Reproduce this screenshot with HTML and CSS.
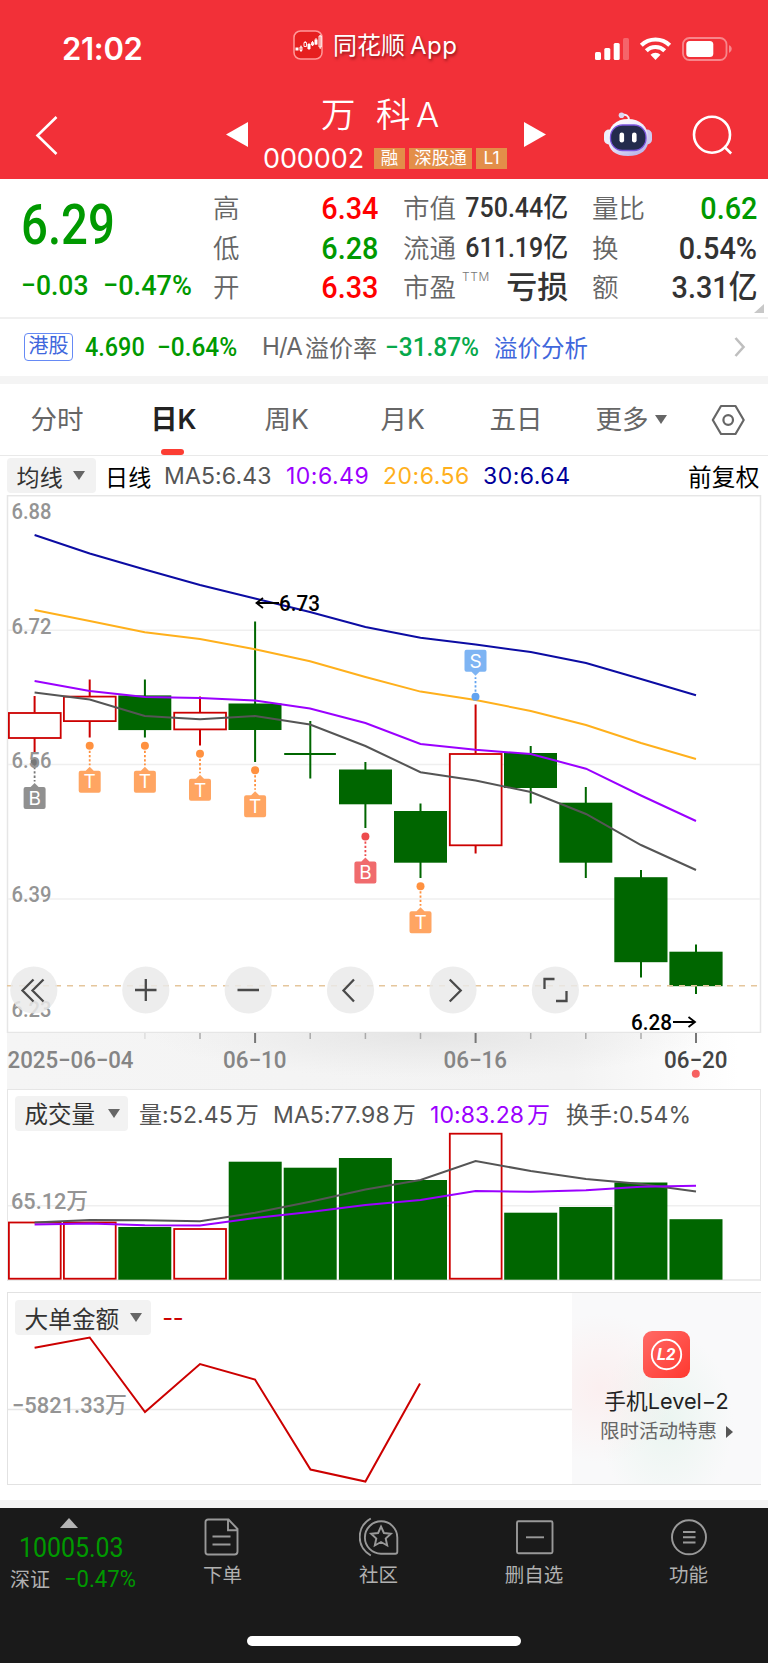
FILE: index.html
```html
<!DOCTYPE html>
<html lang="zh-CN">
<head>
<meta charset="utf-8">
<title>万科A 000002</title>
<link rel="stylesheet" href="styles.css">
</head>
<body>
<header class="top">
  <div class="status">
    <span class="clock">21:02</span>
    <svg class="app-icon" width="30" height="30" viewBox="0 0 30 30"><rect x="1" y="1" width="28" height="28" rx="6.5" fill="#e61f1f" stroke="#f99" stroke-width="1.5"/><path d="M2.500 17.500h3v3h-3zM14.500 14h3v5h-3zM21.500 9.500h3v5h-3z" fill="#fff"/><path d="M7 17h2v3.500h-2zM11 12.500h2.500v4H11zM18.500 12.500h2V15h-2zM26 6h2.300v11H26zM8 15.500v6.500M12.200 11v1.500M16 13v7M19.500 11v5M23 8v7M27.200 5v14" fill="none" stroke="#fff" stroke-width=".9"/></svg>
    <span class="brand">同花顺<b>App</b></span>
    <svg class="signals" width="142" height="30" viewBox="592 32 142 30">
      <g fill="#fff"><rect x="595" y="52" width="6" height="8" rx="1.500"/><rect x="604.300" y="48" width="6" height="12" rx="1.500"/><rect x="613.700" y="43" width="6" height="17" rx="1.500"/><rect x="623" y="38" width="6" height="22" rx="1.500" opacity=".25"/></g>
      <g fill="none" stroke="#fff" stroke-width="4.200"><path d="M641.300 45.200a20.500 20.500 0 0 1 28.400 0"/><path d="M646.300 50.700a13.300 13.300 0 0 1 18.400 0"/></g>
      <path d="M655.500 60l-5-5.200a7.200 7.200 0 0 1 10 0z" fill="#fff"/>
      <rect x="683" y="38" width="43.500" height="22" rx="6.500" fill="none" stroke="#fff" stroke-opacity=".42" stroke-width="1.800"/><rect x="686.300" y="41" width="27" height="16" rx="3.500" fill="#fff"/><path d="M729 45.300a4 4 0 0 1 0 7.600z" fill="#fff" opacity=".42"/>
    </svg>
  </div>
  <div class="nav">
    <svg class="back" width="24" height="44" viewBox="35 114 24 44"><path d="M56.500 117L37.500 135.500l19 18.500" fill="none" stroke="#fff" stroke-width="2.600"/></svg>
    <svg class="prev" width="22" height="26" viewBox="0 0 22 26"><path d="M0 12.500L22 0v25z" fill="#fff"/></svg>
    <div class="stock">
      <h1><span>万</span><span>科</span><span>A</span></h1>
      <p><span class="code">000002</span><i>融</i><i class="wide">深股通</i><i>L1</i></p>
    </div>
    <svg class="next" width="22" height="26" viewBox="0 0 22 26"><path d="M22 12.500L0 0v25z" fill="#fff"/></svg>
    <svg class="bot" width="50" height="46" viewBox="603 111 50 46">
      <defs><linearGradient id="shell" x1="0" y1="0" x2=".6" y2="1"><stop offset="0" stop-color="#fff"/><stop offset=".6" stop-color="#e9e7fa"/><stop offset="1" stop-color="#bcb8ea"/></linearGradient></defs>
      <path d="M621 115.500c5-2 8 .5 8 4.500" fill="none" stroke="#f2f0fb" stroke-width="2"/><circle cx="621.500" cy="115.300" r="2.800" fill="#dcd8f2"/>
      <rect x="604" y="129.500" width="10" height="15" rx="5" fill="#eeeefb"/><rect x="642" y="129.500" width="10" height="15" rx="5" fill="#cfcaf0"/>
      <path d="M608 139c0-13 8-20 20-20s20.500 7 20.500 20c0 11-7.500 17-20.500 17s-20-6-20-17z" fill="url(#shell)"/>
      <rect x="610.500" y="125" width="35.500" height="25.500" rx="12" fill="#232b4c" stroke="#7b55dd" stroke-width="1.300"/>
      <rect x="619.500" y="132.500" width="4.600" height="10" rx="2.300" fill="#fff"/><rect x="632" y="132.500" width="4.600" height="10" rx="2.300" fill="#fff"/>
    </svg>
    <svg class="search" width="42" height="42" viewBox="692 114 42 42"><circle cx="712" cy="134.700" r="18" fill="none" stroke="#fff" stroke-width="2.600"/><path d="M724 146.500l7.200 7" stroke="#fff" stroke-width="2.600"/></svg>
  </div>
</header>

<section class="quote">
  <div class="last"><span class="price num">6.29</span><p><span class="num">−0.03</span><span class="num">−0.47%</span></p></div>
  <dl class="col-a">
    <dt>高</dt><dd class="num up">6.34</dd>
    <dt>低</dt><dd class="num down">6.28</dd>
    <dt>开</dt><dd class="num up">6.33</dd>
  </dl>
  <dl class="col-b">
    <dt>市值</dt><dd class="num small">750.44亿</dd>
    <dt>流通</dt><dd class="num small">611.19亿</dd>
    <dt>市盈<sup>TTM</sup></dt><dd class="loss">亏损</dd>
  </dl>
  <dl class="col-c">
    <dt>量比</dt><dd class="num down">0.62</dd>
    <dt>换</dt><dd class="num">0.54%</dd>
    <dt>额</dt><dd class="num">3.31亿</dd>
  </dl>
  <svg class="corner" width="10" height="9" viewBox="0 0 10 9"><path d="M0 9L10 0v9z" fill="#c8c8c8"/></svg>
</section>

<section class="hk">
  <span class="hk-tag">港股</span><span class="num down">4.690</span><span class="num down wider">−0.64%</span>
  <span class="ha">H/A</span><span class="prem">溢价率</span><span class="num jade wider">−31.87%</span><a>溢价分析</a>
  <svg width="12" height="22" viewBox="0 0 12 22"><path d="M1.500 2l8 9-8 9" fill="none" stroke="#bfbfbf" stroke-width="2.600"/></svg>
</section>

<nav class="tabs">
  <span>分时</span><span class="on">日K</span><span>周K</span><span>月K</span><span>五日</span><span>更多</span>
  <svg class="tri" width="12" height="9" viewBox="0 0 12 9"><path d="M0 0h12L6 9z" fill="#666"/></svg>
  <svg width="34" height="32" viewBox="711 403.500 34 32"><path d="M712.800 419.500l8.200-14h14.500l8.200 14-8.200 14H721z" fill="none" stroke="#666" stroke-width="2.200" stroke-linejoin="round"/><circle cx="728.200" cy="419.500" r="4.800" fill="none" stroke="#666" stroke-width="2.200"/></svg>
</nav>

<div class="ma">
  <span class="chip">均线<svg class="tri" width="12" height="9" viewBox="0 0 12 9"><path d="M0 0h12L6 9z" fill="#666"/></svg></span>
  <span class="k">日线</span><span class="m5">MA5:6.43</span><span class="m10">10:6.49</span><span class="m20">20:6.56</span><span class="m30">30:6.64</span><span class="k adj">前复权</span>
</div>

<svg class="chart" width="768" height="538" viewBox="0 495 768 538">
  <g fill="none" stroke="#e6e6e6" stroke-width="1.500"><rect x="7.500" y="495.700" width="753" height="536.800"/></g>
  <path d="M8 630.300h752M8 764.400h752M8 899h752" stroke="#efefef" stroke-width="1.500"/>
  <g class="axis">
    <text x="11.500" y="519" textLength="40" lengthAdjust="spacingAndGlyphs">6.88</text><text x="11.500" y="633.500" textLength="40" lengthAdjust="spacingAndGlyphs">6.72</text><text x="11.500" y="902.300" textLength="40" lengthAdjust="spacingAndGlyphs">6.39</text><text x="11.500" y="1017" textLength="40" lengthAdjust="spacingAndGlyphs">6.23</text>
  </g>
  <path class="wick-up" d="M34.600 696v16.500M34.600 738v14M89.700 679.500v17M89.700 721v16.500M200 696.500v16M200 729.500v16M475.600 704.500v49M475.600 846v7.500"/>
  <g class="body-up"><rect x="8.900" y="713" width="51.800" height="25"/><rect x="63.900" y="696.600" width="51.800" height="24.500"/><rect x="174.200" y="712.700" width="51.800" height="16.700"/><rect x="449.800" y="754" width="51.800" height="91.300"/></g>
  <path class="wick-down" d="M144.900 679.500v58M255.100 621.500v140.500M310.300 721v57.500M284.200 754h51.700M365.400 762v66M420.500 803.500v74.500M530.700 746v57.500M585.800 787v91M641 870v107.500M696 944.500v49.500"/>
  <g fill="#060"><rect x="118.300" y="695.400" width="53" height="34.700"/><rect x="228.500" y="703.500" width="53" height="26.500"/><rect x="339" y="769.500" width="53" height="34.800"/><rect x="394" y="811" width="53" height="51.700"/><rect x="504" y="753" width="53" height="35"/><rect x="559.300" y="802.700" width="53" height="60"/><rect x="614.300" y="877.200" width="53.200" height="85"/><rect x="669.400" y="951.700" width="53.200" height="34.500"/></g>
  <path d="M7 985.700h754" stroke="#e5c69c" stroke-width="1.500" stroke-dasharray="6 6"/>
  <g fill="none" stroke-width="2">
    <polyline stroke="#555" points="34.6,692.5 89.7,699.5 144.8,716 200,719.3 255,716 310,724.5 365.400,746 420.500,772.2 475.600,780.5 530.800,792 586,814 641,845 696,870"/>
    <polyline stroke="#9b00ff" points="34.6,681 89.7,691 144.8,697 200,698 255,700.5 310,708.5 365.400,723 420.500,744 475.600,749.7 530.800,754 586,768.7 641,795.5 696,821"/>
    <polyline stroke="#ffb01c" points="34.6,610 89.7,621 144.8,632.3 200,639 255,649.3 310,661.3 365.400,677 420.500,691.6 475.600,700 530.800,711 586,725 641,743 696,759"/>
    <polyline stroke="#0c0ca3" points="34.6,535 89.7,553.5 144.8,569.5 200,585 255,598.5 310,612 365.400,627 420.500,637.7 475.600,644.5 530.800,652 586,663 641,679 696,695.3"/>
  </g>
  <defs>
    <g id="pin"><circle r="4"/><path d="M0 5v14.500" stroke="currentColor" stroke-width="1.800" stroke-dasharray="2.300 2"/><path d="M-4 25L0 21l4 4h5a2 2 0 0 1 2 2v18a2 2 0 0 1-2 2H-9a2 2 0 0 1-2-2V27a2 2 0 0 1 2-2z" opacity=".82"/></g>
  </defs>
  <g class="pins">
    <g class="grey" transform="translate(34.600 762)"><use href="#pin"/><text y="42.800">B</text></g>
    <g class="orange" transform="translate(89.700 745.700)"><use href="#pin"/><text y="42.800">T</text></g>
    <g class="orange" transform="translate(144.900 745.700)"><use href="#pin"/><text y="42.800">T</text></g>
    <g class="orange" transform="translate(200 753.800)"><use href="#pin"/><text y="42.800">T</text></g>
    <g class="orange" transform="translate(255.100 770.300)"><use href="#pin"/><text y="42.800">T</text></g>
    <g class="red" transform="translate(365.400 836.400)"><use href="#pin"/><text y="42.800">B</text></g>
    <g class="orange" transform="translate(420.500 886.200)"><use href="#pin"/><text y="42.800">T</text></g>
    <g class="blue" transform="translate(475.500 696.800)"><use href="#pin" transform="scale(1 -1)"/><text y="-29">S</text></g>
  </g>
  <text class="axis" x="11.500" y="768" textLength="40" lengthAdjust="spacingAndGlyphs">6.56</text>
  <g fill="none" stroke="#000" stroke-width="1.800"><path d="M279 603h-22M263 598l-6.500 5 6.500 5M673 1022h21M688.500 1017l6.500 5-6.500 5"/></g>
  <g class="peak"><text x="279" y="611.300" textLength="41" lengthAdjust="spacingAndGlyphs">6.73</text><text x="631" y="1030" textLength="41" lengthAdjust="spacingAndGlyphs">6.28</text></g>
  <g fill="#e9e9e9" fill-opacity=".84"><circle cx="33.800" cy="990" r="23.600"/><circle cx="145.800" cy="990" r="23.600"/><circle cx="248.200" cy="990" r="23.600"/><circle cx="350.500" cy="990" r="23.600"/><circle cx="453" cy="990" r="23.600"/><circle cx="555.400" cy="990" r="23.600"/></g>
  <path d="M33.500 979.500L22.500 990.500l11 11M43.500 979.500L32.500 990.500l11 11M135 990h21.500M145.800 979v22M237.500 990h21.500M354 979.500L343.500 990.500l10.500 11M449.700 979.500l11 11-11 11M544.500 989v-10h10M556 1001h10.500v-10" fill="none" stroke="#4a4a4a" stroke-width="2.300"/>
</svg>

<svg class="dates" width="768" height="56" viewBox="0 1033 768 56">
  <defs>
    <linearGradient id="strip"><stop offset="0" stop-color="#f5f5f5"/><stop offset=".75" stop-color="#f3f3f3"/><stop offset=".97" stop-color="#fff"/></linearGradient>
    <radialGradient id="shade" cx=".5" cy="0" r=".5" gradientTransform="translate(.5 0) scale(1 1.600) translate(-.5 0)"><stop offset="0" stop-color="#e4e4e4"/><stop offset="1" stop-color="#e8e8e8" stop-opacity="0"/></radialGradient>
  </defs>
  <rect x="7" y="1033" width="754" height="56" fill="url(#strip)"/><rect x="150" y="1033" width="560" height="56" fill="url(#shade)"/>
  <path d="M200 1033v6M310.200 1033v6M365.400 1033v6M420.500 1033v6M530.700 1033v6M585.800 1033v6M641 1033v6" stroke="#aaa" stroke-width="1.500"/>
  <path d="M144.900 1033v6" stroke="#ddd" stroke-width="1.500"/>
  <path d="M255.100 1033v10M475.600 1033v10M696 1033v10" stroke="#777" stroke-width="2"/>
  <g class="date"><text x="7.500" y="1067.800" textLength="126" lengthAdjust="spacingAndGlyphs">2025−06−04</text><text x="223" y="1067.800" textLength="63.500" lengthAdjust="spacingAndGlyphs">06−10</text><text x="443.500" y="1067.800" textLength="63.500" lengthAdjust="spacingAndGlyphs">06−16</text><text class="today" x="664" y="1067.800" textLength="63.500" lengthAdjust="spacingAndGlyphs">06−20</text></g>
  <circle cx="695.800" cy="1073.800" r="4" fill="#f66161"/>
</svg>

<section class="volume">
  <div class="legend">
    <span class="chip">成交量<svg class="tri" width="12" height="9" viewBox="0 0 12 9"><path d="M0 0h12L6 9z" fill="#666"/></svg></span>
    <span>量:52.45<s>万</s></span><span>MA5:77.98<s>万</s></span><span class="m10">10:83.28<s>万</s></span><span>换手:0.54%</span>
  </div>
  <svg width="768" height="149" viewBox="0 1132 768 149">
    <path d="M8 1205.800h752" stroke="#efefef" stroke-width="1.500"/>
    <text class="axis" x="11" y="1209" textLength="77" lengthAdjust="spacingAndGlyphs">65.12万</text>
    <path d="M7 1280h754" stroke="#e6e6e6" stroke-width="1.500"/>
    <g class="body-up"><rect x="8.900" y="1222.500" width="51.800" height="56.200"/><rect x="63.900" y="1222.500" width="51.800" height="56.200"/><rect x="174.200" y="1229" width="51.800" height="49.700"/><rect x="449.800" y="1133.700" width="51.800" height="145"/></g>
    <g fill="#060"><rect x="118.300" y="1227" width="53" height="52.700"/><rect x="228.700" y="1161.700" width="53" height="118"/><rect x="283.700" y="1167.700" width="53" height="112"/><rect x="338.900" y="1158" width="53" height="121.700"/><rect x="394" y="1180" width="53" height="99.700"/><rect x="504.200" y="1212.700" width="53" height="67"/><rect x="559.300" y="1207" width="53" height="72.700"/><rect x="614.400" y="1182.500" width="53" height="97.200"/><rect x="669.500" y="1219.200" width="53" height="60.500"/></g>
    <g fill="none" stroke-width="2">
      <polyline stroke="#555" points="34.6,1222.5 89.700,1220 144.8,1220.3 200,1221.3 255,1212.8 310,1201.8 365.400,1189.5 420.500,1180 475.600,1161 530.800,1171 586,1179 641,1184 696,1191.5"/>
      <polyline stroke="#9b00ff" points="34.6,1224.5 89.700,1223.5 144.8,1225.2 200,1225.4 255,1218 310,1212 365.400,1205 420.500,1200 475.600,1191 530.800,1191.700 586,1190.200 641,1186.800 696,1185.800"/>
    </g>
  </svg>
</section>

<section class="flow">
  <div class="flow-chart">
    <div class="legend"><span class="chip">大单金额<svg class="tri" width="12" height="9" viewBox="0 0 12 9"><path d="M0 0h12L6 9z" fill="#666"/></svg></span><span class="dash">--</span></div>
    <svg width="564" height="148" viewBox="8 1336 564 148">
      <path d="M8 1409.500h564" stroke="#e6e6e6" stroke-width="1.300"/>
      <text class="axis" x="12" y="1413" textLength="115" lengthAdjust="spacingAndGlyphs">−5821.33万</text>
      <polyline fill="none" stroke="#c00" stroke-width="2" points="34.6,1347.8 89.7,1337.5 145,1412 200,1364 255,1379.500 310.500,1469.500 365.400,1481.500 420,1383.500"/>
    </svg>
  </div>
  <aside class="promo">
    <svg width="47" height="47" viewBox="0 0 47 47"><defs><linearGradient id="l2" x2="1" y2="1"><stop offset="0" stop-color="#ff6a66"/><stop offset="1" stop-color="#ff3930"/></linearGradient></defs><rect width="47" height="47" rx="9" fill="url(#l2)"/><circle cx="23.500" cy="23.500" r="14.700" fill="none" stroke="#fff" stroke-width="1.900"/><text x="23.200" y="29.300" text-anchor="middle">L2</text></svg>
    <strong>手机Level−2</strong>
    <p>限时活动特惠<svg width="7" height="12" viewBox="0 0 7 12"><path d="M0 0l7 6-7 6z" fill="#555"/></svg></p>
  </aside>
</section>

<footer class="bar">
  <div class="index">
    <svg width="18" height="10" viewBox="0 0 18 10"><path d="M0 10L9 0l9 10z" fill="#b4b4b4"/></svg>
    <span class="num points">10005.03</span>
    <p>深证<span class="num">−0.47%</span></p>
  </div>
  <div class="item"><svg width="40" height="40" viewBox="0 0 40 40"><path d="M5 2.500h20.500l9 9.500v22.500a3 3 0 0 1-3 3H5A2.500 2.500 0 0 1 2.500 35V5A2.500 2.500 0 0 1 5 2.500zM25 3v10.300h9M9.500 19.500h18M9.500 27.500h18"/></svg><span>下单</span></div>
  <div class="item"><svg width="40" height="40" viewBox="0 0 40 40"><path d="M11.800 1.500C-3 10-3 30 11.800 38.500M38.300 20.500A16.200 16.200 0 1 0 22 36.700h14.300a2 2 0 0 0 2-2zM22 9.500l2.900 6.500 7 .7-5.200 4.800 1.500 7L22 25l-6.200 3.500 1.500-7-5.200-4.800 7-.7z"/></svg><span>社区</span></div>
  <div class="item"><svg width="40" height="40" viewBox="0 0 40 40"><rect x="3" y="4.200" width="35.500" height="32" rx="1.500"/><path d="M12 20.300h18"/></svg><span>删自选</span></div>
  <div class="item"><svg width="40" height="40" viewBox="0 0 40 40"><circle cx="20" cy="20.300" r="17"/><path d="M14 15h12.500M14 20.300h12.500M14 25.500h12.500"/></svg><span>功能</span></div>
</footer>
<div class="home"><i></i></div>
</body>
</html>
```
FILE: styles.css
```css
* { box-sizing: border-box; }
body, h1, p, dl, dd { margin: 0; }
body { width: 768px; background: #fff; color: #333; font-family: Inter, "Noto Sans CJK SC", sans-serif; overflow-x: hidden; }
svg { display: block; flex: none; }
i, s { font-style: normal; text-decoration: none; }
span, strong, a, dt, dd { white-space: nowrap; }

.num { font-family: Roboto, "Noto Sans CJK SC", sans-serif; font-weight: 500; transform: scaleX(.9); transform-origin: left center; }
.wider { transform: scaleX(.94); }
.up { color: #f00; }
.down { color: #090; }
.jade { color: #07a94b; }

/* header */
.top { height: 179px; background: #f23038; color: #fff; }
.status { display: flex; height: 90px; padding-left: 62px; }
.clock { width: 231px; font-size: 31px; font-weight: 600; line-height: 98px; letter-spacing: -.3px; }
.app-icon { margin-top: 29.5px; }
.brand { width: 259px; margin-left: 10px; font-size: 24px; line-height: 91px; text-shadow: 1px 2px 3px rgba(60, 0, 0, .55); }
.brand b { margin-left: 5px; font-weight: 400; font-size: 24px; letter-spacing: .5px; }
.signals { margin-top: 32px; }
.nav { display: flex; height: 89px; padding-left: 35px; }
.back { margin-top: 24px; }
.prev { margin: 32px 0 0 167px; }
.stock { width: 276px; padding-left: 15px; }
h1 { display: flex; height: 50px; padding-left: 58px; font-size: 34.5px; font-weight: 350; line-height: 50px; }
h1 span:nth-child(1) { width: 55px; }
h1 span:nth-child(2) { width: 40px; }
.stock p { display: flex; align-items: center; height: 37px; gap: 4px; }
.code { width: 107px; font-size: 27px; line-height: 34px; letter-spacing: -.1px; }
.stock i { width: 31px; height: 21px; background: #e38e49; font-size: 17.5px; line-height: 20px; text-align: center; }
.stock i.wide { width: 63px; }
.next { margin-top: 32px; }
.bot { margin: 21px 0 0 57px; }
.search { margin: 24px 0 0 39px; }

/* quote panel */
.quote { display: grid; grid-template-columns: 192px 188px 187px 190px; position: relative; height: 140px; padding: 10px 0 0 21px; border-top: 1px solid #fff; border-bottom: 2px solid #f0f0f0; }
.last { color: #090; }
.price { display: block; height: 70px; font-size: 55px; line-height: 70px; transform: scaleX(.86); }
.last p { display: flex; height: 44px; font-size: 28.500px; line-height: 51px; }
.last p span { transform: scaleX(.95); }
.last p span:first-child { width: 82px; transform: scaleX(.93); }
dl { display: grid; grid-template-columns: auto 1fr; grid-auto-rows: 39.500px; line-height: 36px; }
dt { color: #666; font-size: 26.500px; font-weight: 350; }
dd { font-size: 32px; justify-self: end; }
dd.num { transform-origin: right center; }
.col-a { width: 165px; }
.col-b { width: 165px; margin-left: 2px; }
.col-c { width: 165px; margin-left: 4px; }
.col-b .small { font-size: 27px; transform: scaleX(.925); }
.col-b .loss { font-size: 31px; font-weight: 500; }
.col-b dt { width: 54px; }
sup { position: absolute; margin-left: 6px; padding-top: 2px; font-size: 12px; line-height: 12px; letter-spacing: .6px; color: #777; }
.corner { position: absolute; left: 754px; top: 124px; }

.hk { display: grid; grid-template-columns: 61px 72px 105px 43px 80px 109px 240px 12px; align-items: center; height: 57px; padding: 0 0 2px 24px; font-size: 24px; }
.hk .num { font-size: 26px; }
.hk-tag { width: 49px; height: 28px; border: 1.500px solid #668af5; border-radius: 4px; color: #4168dd; font-size: 20px; line-height: 25px; text-align: center; }
.ha, .prem { color: #666; }
.ha { letter-spacing: -.8px; }
.hk a { color: #4067dc; font-size: 23.500px; }

/* period tabs */
.tabs { display: grid; grid-template-columns: 120px 114px 116px 109px 106px 59px 56px 34px; align-items: center; height: 80px; padding-left: 30.500px; border-top: 8px solid #f4f4f4; border-bottom: 1px solid #e9e9e9; color: #666; font-size: 26.500px; line-height: 71px; }
.tabs .on { position: relative; color: #222; font-weight: 600; font-size: 27px; }
.tabs .on::after { content: ""; position: absolute; left: 10px; bottom: 0; width: 23px; height: 6px; border-radius: 3px; background: #fc3d33; }

/* legends */
.chip { display: flex; align-items: center; gap: 10.500px; height: 35px; padding: 0 9.500px; border-radius: 4px; background: #f2f2f2; color: #333; }
.ma { display: grid; grid-template-columns: 98px 59px 122px 97px 100px 205px 72px; align-items: center; height: 39px; padding-left: 7px; font-size: 23px; letter-spacing: .15px; }
.ma .chip { width: 89px; }
.k { color: #000; }
.adj { font-size: 23.700px; }
.m5 { color: #555; }
.ma .m10, .legend .m10 { color: #9b00ff; }
.ma .m10, .m20, .m30 { letter-spacing: .5px; }
.m20 { color: #ffb01c; }
.m30 { color: #00009a; }

/* charts */
.axis { fill: #949494; font: 500 22.500px Roboto, "Noto Sans CJK SC", sans-serif; }
.peak { fill: #000; font: 500 22.500px Roboto, sans-serif; }
.date { fill: #858585; font: 500 23px Roboto, sans-serif; }
.today { fill: #444; }
.wick-up { stroke: #c00; stroke-width: 2; }
.wick-down { stroke: #060; stroke-width: 2; }
.body-up rect { fill: #fff; stroke: #c00; stroke-width: 1.800; }
.pins text { fill: #fff; font: 400 19px Inter, sans-serif; text-anchor: middle; }
.grey { fill: #777; color: #777; }
.orange { fill: #ff913f; color: #ff913f; }
.red { fill: #ed4b4d; color: #ed4b4d; }
.blue { fill: #62a3f0; color: #62a3f0; }

.volume { width: 754px; height: 192px; margin-left: 7px; border: solid #e6e6e6; border-width: 1px 1px 0; }
.volume > svg { margin-left: -8px; }
.volume .legend { display: grid; grid-template-columns: 124px 134px 157px 136px 130px; align-items: center; height: 42px; padding: 4px 0 0 7px; font-size: 23px; color: #555; letter-spacing: .1px; }
.volume .chip { width: 113px; gap: 12.500px; font-size: 23.500px; letter-spacing: 0; }
.legend s { margin-left: 3px; }

.flow { display: grid; grid-template-columns: 564px 189px; width: 754px; height: 193px; margin: 11px 0 0 7px; border: 1px solid #e2e2e2; }
.flow .legend { display: flex; align-items: center; gap: 11px; height: 43px; padding: 6px 0 0 7px; font-size: 23.700px; }
.dash { color: #c00; letter-spacing: -.5px; }
.promo { display: flex; flex-direction: column; align-items: center; padding-top: 38px; background: radial-gradient(circle at 15% 50%, rgba(255, 220, 220, .35), transparent 40%), radial-gradient(ellipse at 50% 68%, rgba(225, 242, 234, .6), transparent 50%), #f9f9fa; }
.promo text { fill: #fff; font: italic 700 17px Roboto, sans-serif; }
.promo strong { margin-top: 8px; font-size: 21.700px; font-weight: 400; line-height: 30px; color: #222; }
.promo p { display: flex; align-items: center; gap: 9px; margin-top: 1px; font-size: 19.500px; line-height: 29px; color: #666; }

/* bottom bar */
.bar { display: grid; grid-template-columns: 145px 155px 157px 154px 155px; height: 114px; margin-top: 15px; border-top: 8px solid #f4f4f4; background: #1a1a1a; color: #b0b0b0; }
.index { display: flex; flex-direction: column; padding: 10px 0 0 10px; }
.index > svg { margin-left: 50px; }
.points { margin-left: 9px; width: 120px; color: #090; font-size: 28px; font-weight: 400; line-height: 40px; transform: scaleX(.89); }
.index p { display: flex; font-size: 20px; line-height: 24px; }
.index p .num { margin-left: 14px; color: #090; font-size: 23px; font-weight: 400; transform: scaleX(.96); }
.item { display: flex; flex-direction: column; align-items: center; padding-top: 9px; font-size: 19.500px; line-height: 36px; }
.item svg { fill: none; stroke: #999; stroke-width: 1.900; }
.home { height: 49px; padding-top: 22px; background: #1a1a1a; }
.home i { display: block; width: 274px; height: 10px; margin: 0 auto; border-radius: 5px; background: #fff; }
```
